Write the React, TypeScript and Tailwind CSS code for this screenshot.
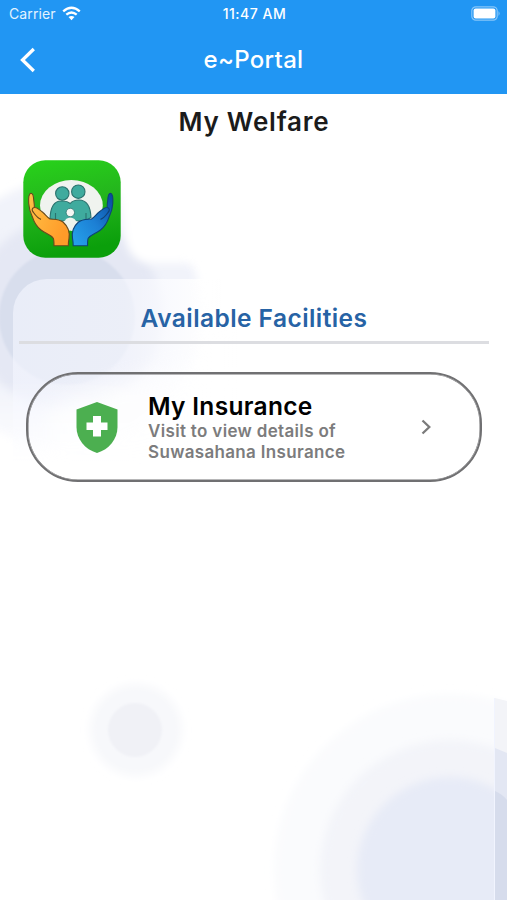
function Backdrop() {
  return (
    <svg className="pointer-events-none absolute inset-0" width="507" height="900" viewBox="0 0 507 900" aria-hidden="true">
      <defs>
        <filter id="soft" x="-20%" y="-20%" width="140%" height="140%">
          <feGaussianBlur stdDeviation="4" />
        </filter>
        <filter id="slight" x="-20%" y="-20%" width="140%" height="140%">
          <feGaussianBlur stdDeviation="1.2" />
        </filter>
        <filter id="wide" x="-30%" y="-30%" width="160%" height="160%">
          <feGaussianBlur stdDeviation="10" />
        </filter>
        <linearGradient id="fadeY" x1="0" y1="0" x2="0" y2="1">
          <stop offset="0" stopColor="#fff" />
          <stop offset="0.75" stopColor="#fff" />
          <stop offset="1" stopColor="#000" />
        </linearGradient>
        <mask id="leftMask">
          <rect x="0" y="130" width="260" height="335" fill="url(#fadeY)" />
        </mask>
        <linearGradient id="panel" x1="0" y1="0" x2="1" y2="0">
          <stop offset="0" stopColor="#f4f6ff" stopOpacity="0.62" />
          <stop offset="0.5" stopColor="#f8f9ff" stopOpacity="0.62" />
          <stop offset="0.85" stopColor="#fff" stopOpacity="0.9" />
          <stop offset="1" stopColor="#fff" stopOpacity="1" />
        </linearGradient>
      </defs>
      <g mask="url(#leftMask)">
        <circle cx="67" cy="315" r="135" fill="#f1f3fa" filter="url(#soft)" />
        <circle cx="67" cy="314" r="96" fill="#e5e8f4" filter="url(#soft)" />
        <circle cx="67" cy="317" r="68" fill="#d8deed" filter="url(#slight)" />
        <path d="M110 130H270V330H212V263H150Q130 262 126 240Z" fill="#fff" filter="url(#soft)" />
        <path d="M13 470V313a34 34 0 0 1 34-34h190v191z" fill="url(#panel)" />
        <path d="M50 490V408q50-26 150-44h40V490Z" fill="#fff" opacity="0.7" filter="url(#wide)" />
      </g>
      <circle cx="136" cy="730" r="46" fill="#f7f8fb" filter="url(#soft)" />
      <circle cx="135" cy="730" r="27" fill="#f0f1f6" filter="url(#slight)" />
      <circle cx="450" cy="870" r="176" fill="#fafbfd" filter="url(#soft)" />
      <circle cx="450" cy="870" r="130" fill="#f3f4f9" filter="url(#soft)" />
      <circle cx="450" cy="870" r="93" fill="#e7ebf7" filter="url(#soft)" />
      <path d="M495 698l12 3v199h-12z" fill="#f3f4f8" />
      <path d="M495 748l12 5v147h-12z" fill="#e3e7f3" />
      <path d="M495 791q7 3 12 9v100h-12z" fill="#d6dcec" />
      <path d="M494.5 698v202" stroke="#f1f4fe" strokeWidth="1" />
    </svg>
  );
}

const HAND =
  "M8 33.3C6 33.6 5.400 38 5.700 43.3C6 49 7.500 53 9.300 56.700C11 62 14 67 18 70C23 74 28 74.500 30.300 78.300Q31 80 31 85.700H45.300Q45.300 82 46 78.300C47 72 44.500 66 40 62C36 59 32 59.500 27 59C24 57 22 54 20 52.500C16 49 13 47 11.300 47.500C11.500 44 11 42 10.700 40C10.500 36 10 33.300 8 33.300Z";
const FINGER = "M11.300 47.500C8.500 48 8.700 50.500 10.500 52.500C13 56 15 58.500 18 59.300";

function WelfareLogo() {
  return (
    <svg width="98" height="98" viewBox="0 0 98 98" aria-label="My Welfare">
      <defs>
        <linearGradient id="green" x1="0" y1="0" x2="0.2" y2="1">
          <stop offset="0" stopColor="#28d31a" />
          <stop offset="0.5" stopColor="#24b51d" />
          <stop offset="1" stopColor="#0b9f0b" />
        </linearGradient>
        <linearGradient id="orange" x1="0" y1="0" x2="1" y2="0.5">
          <stop offset="0" stopColor="#ffc247" />
          <stop offset="1" stopColor="#ff9b29" />
        </linearGradient>
        <linearGradient id="blue" x1="1" y1="1" x2="0" y2="0">
          <stop offset="0" stopColor="#27a4ec" />
          <stop offset="0.5" stopColor="#1c7fd4" />
          <stop offset="1" stopColor="#07469b" />
        </linearGradient>
      </defs>
      <rect x="0.3" y="0.3" width="97.4" height="97.4" rx="22" fill="url(#green)" />
      <ellipse cx="48.4" cy="45.4" rx="31.4" ry="25.4" fill="#f0f3ef" />
      <g fill="#3fab9e" stroke="#2a726d" strokeWidth="1.1">
        <path d="M27 58.500C27.500 47 31 41 38 41Q44 40.500 47.300 43.500Q50 40 56 40C63.500 40 67.500 47 68 57.500L62 61H34Z" />
        <circle cx="39.300" cy="33.500" r="6.700" />
        <circle cx="55.300" cy="31.700" r="6.700" />
        <path d="M32.500 59v-6M63 59v-6" />
      </g>
      <path d="M38 62q4-.5 5-3q4.300-3 8.500 0q1.500 3 5 3L49 71Z" fill="#eef4ed" />
      <circle cx="47.300" cy="52.500" r="4.200" fill="#f5f7f4" stroke="#2a726d" strokeWidth="0.8" />
      <path d={HAND} fill="url(#orange)" stroke="#684a1d" strokeWidth="1.1" />
      <path d={FINGER} fill="none" stroke="#684a1d" strokeWidth="1.2" />
      <g transform="translate(95.500 0) scale(-1 1)">
        <path d={HAND} fill="url(#blue)" stroke="#104276" strokeWidth="1.1" />
        <path d={FINGER} fill="none" stroke="#104276" strokeWidth="1.2" />
      </g>
    </svg>
  );
}

function WifiIcon() {
  return (
    <svg width="19" height="15" viewBox="0 0 19 15" fill="none" stroke="#fff" strokeWidth="2.3" aria-hidden="true">
      <path d="M1.200 5.400Q9.500-2 17.800 5.400" />
      <path d="M4.300 8.700Q9.500 4.200 14.700 8.700" />
      <path d="M6.500 11.100Q9.500 8.700 12.500 11.100L9.500 14.200Z" fill="#fff" stroke="none" />
    </svg>
  );
}

export default function App() {
  return (
    <div className="relative h-[900px] w-[507px] overflow-hidden bg-white font-['Inter','Liberation_Sans',sans-serif]">
      <Backdrop />
      <div className="relative flex flex-col">
        <header className="h-[94px] bg-[#2196f3] text-white">
          <div className="grid h-[27px] grid-cols-[1fr_90px_1fr] items-center pl-[9px] pr-[7px] leading-none">
            <div className="flex items-center gap-[6px] text-[#e3f3ff]">
              <span className="text-[14px] tracking-[0.1px]">Carrier</span>
              <WifiIcon />
            </div>
            <span className="text-center text-[14px] font-medium tracking-[0.5px]">11:47 AM</span>
            <svg className="justify-self-end" width="29" height="15" viewBox="0 0 29 15" aria-hidden="true">
              <rect x="0.8" y="0.8" width="25.4" height="13.4" rx="4" fill="none" stroke="#86c6f9" strokeWidth="1.2" />
              <rect x="2.6" y="2.6" width="21.8" height="9.8" rx="2" fill="#fff" />
              <path d="M27.500 5q2.200 2.500 0 5z" fill="#86c6f9" />
            </svg>
          </div>
          <div className="grid h-[65px] grid-cols-[100px_1fr_100px] items-center">
            <svg className="ml-5" width="16" height="26" viewBox="0 0 16 26" fill="none" stroke="#fff" strokeWidth="3.3" aria-label="Back">
              <path d="M13.800 2L2.500 13L13.800 24" />
            </svg>
            <h1 className="text-center text-[24px] font-medium leading-none tracking-[0.3px]">e~Portal</h1>
          </div>
        </header>
        <main>
          <h2 className="pl-px pt-[12px] text-center text-[26px] font-semibold leading-8 tracking-[0.8px] text-[#1b1b1b]">My Welfare</h2>
          <div className="ml-[22.5px] mt-[21.5px] w-fit">
            <WelfareLogo />
          </div>
          <h3 className="mt-[44.5px] pl-px text-center text-[24.5px] font-semibold leading-8 tracking-[0.43px] text-[#2763a5]">Available Facilities</h3>
          <div className="ml-[19px] mr-[18px] mt-[7px] h-[3px] bg-[#dcdde1]" />
          <button className="ml-[26px] mt-[28px] flex h-[110px] w-[456px] items-center rounded-[52px] border-2 border-[#707072] pl-[48px] text-left shadow-[inset_0_0_0_0.5px_#707072]">
            <svg width="42" height="51" viewBox="0 0 42 51" aria-hidden="true">
              <path d="M21 0L41.500 7.500V25C41.500 37 33 47.500 21 51C9 47.500 .5 37 .5 25V7.500Z" fill="#4caf50" />
              <path d="M17 14h8v6.500h6.500v7.500H25v6.500h-8V28h-6.500v-7.500H17z" fill="#fff" />
            </svg>
            <span className="ml-[30px] flex w-[230px] flex-col">
              <span className="text-[24.5px] font-semibold leading-[29px] tracking-[0.3px] text-black">My Insurance</span>
              <span className="text-[17px] font-semibold leading-[20.5px] tracking-[0.33px] text-[#7c7c7d]">
                Visit to view details of
                <br />
                Suwasahana Insurance
              </span>
            </span>
            <svg className="ml-[43px]" width="11" height="16" viewBox="0 0 11 16" fill="none" stroke="#7b7b7b" strokeWidth="2.3" aria-hidden="true">
              <path d="M1.500 1.500L8.300 8L1.500 14.500" />
            </svg>
          </button>
        </main>
      </div>
    </div>
  );
}
